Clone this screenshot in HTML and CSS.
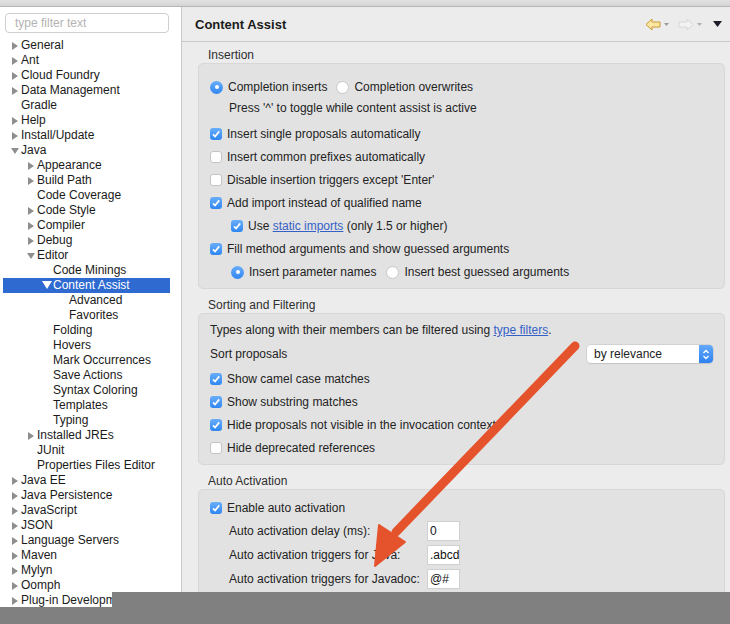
FILE: index.html
```html
<!DOCTYPE html>
<html>
<head>
<meta charset="utf-8">
<title>Preferences</title>
<link rel="stylesheet" href="styles.css">
</head>
<body>
<div class="titlebar"><span>Preferences</span></div>
<div class="main">
  <aside class="sidebar">
    <div class="filter">type filter text</div>
    <ul class="tree">
      <li class="l0"><i class="tw r"></i>General</li>
      <li class="l0"><i class="tw r"></i>Ant</li>
      <li class="l0"><i class="tw r"></i>Cloud Foundry</li>
      <li class="l0"><i class="tw r"></i>Data Management</li>
      <li class="l0"><i class="tw"></i>Gradle</li>
      <li class="l0"><i class="tw r"></i>Help</li>
      <li class="l0"><i class="tw r"></i>Install/Update</li>
      <li class="l0"><i class="tw d"></i>Java</li>
      <li class="l1"><i class="tw r"></i>Appearance</li>
      <li class="l1"><i class="tw r"></i>Build Path</li>
      <li class="l1"><i class="tw"></i>Code Coverage</li>
      <li class="l1"><i class="tw r"></i>Code Style</li>
      <li class="l1"><i class="tw r"></i>Compiler</li>
      <li class="l1"><i class="tw r"></i>Debug</li>
      <li class="l1"><i class="tw d"></i>Editor</li>
      <li class="l2"><i class="tw"></i>Code Minings</li>
      <li class="l2 sel"><i class="tw d"></i>Content Assist</li>
      <li class="l3"><i class="tw"></i>Advanced</li>
      <li class="l3"><i class="tw"></i>Favorites</li>
      <li class="l2"><i class="tw"></i>Folding</li>
      <li class="l2"><i class="tw"></i>Hovers</li>
      <li class="l2"><i class="tw"></i>Mark Occurrences</li>
      <li class="l2"><i class="tw"></i>Save Actions</li>
      <li class="l2"><i class="tw"></i>Syntax Coloring</li>
      <li class="l2"><i class="tw"></i>Templates</li>
      <li class="l2"><i class="tw"></i>Typing</li>
      <li class="l1"><i class="tw r"></i>Installed JREs</li>
      <li class="l1"><i class="tw"></i>JUnit</li>
      <li class="l1"><i class="tw"></i>Properties Files Editor</li>
      <li class="l0"><i class="tw r"></i>Java EE</li>
      <li class="l0"><i class="tw r"></i>Java Persistence</li>
      <li class="l0"><i class="tw r"></i>JavaScript</li>
      <li class="l0"><i class="tw r"></i>JSON</li>
      <li class="l0"><i class="tw r"></i>Language Servers</li>
      <li class="l0"><i class="tw r"></i>Maven</li>
      <li class="l0"><i class="tw r"></i>Mylyn</li>
      <li class="l0"><i class="tw r"></i>Oomph</li>
      <li class="l0"><i class="tw r"></i>Plug-in Development</li>
    </ul>
  </aside>
  <section class="panel">
    <header class="phead">
      <h1>Content Assist</h1>
      <div class="nav">
        <svg width="16" height="13" viewBox="0 0 16 13"><path d="M1 6.5 L7 1 L7 4 L15 4 L15 9 L7 9 L7 12 Z" fill="#fbe6a2" stroke="#c99a30" stroke-width="1" stroke-linejoin="round"/></svg>
        <svg class="dd" width="5" height="4" viewBox="0 0 5 4"><path d="M0 0 L5 0 L2.5 3 Z" fill="#9a9a9a"/></svg>
        <svg class="fwd" width="16" height="13" viewBox="0 0 16 13"><path d="M15 6.5 L9 1 L9 4 L1 4 L1 9 L9 9 L9 12 Z" fill="#f3f3f3" stroke="#d6d6d6" stroke-width="1" stroke-linejoin="round"/></svg>
        <svg class="dd" width="5" height="4" viewBox="0 0 5 4"><path d="M0 0 L5 0 L2.5 3 Z" fill="#b0b0b0"/></svg>
        <svg class="menu" width="9" height="6" viewBox="0 0 9 6"><path d="M0 0 L9 0 L4.5 6 Z" fill="#1c1c2a"/></svg>
      </div>
    </header>
    <div class="content">
      <div class="glabel">Insertion</div>
      <div class="group">
        <div class="row"><span class="rb on"></span>Completion inserts<span class="rb sp"></span>Completion overwrites</div>
        <div class="row note">Press '^' to toggle while content assist is active</div>
        <div class="row push"><span class="cb on"><svg width="12" height="12" viewBox="0 0 12 12"><path d="M3 6.3 L5.1 8.5 L9.2 3.4" fill="none" stroke="#fff" stroke-width="1.7"/></svg></span>Insert single proposals automatically</div>
        <div class="row"><span class="cb"></span>Insert common prefixes automatically</div>
        <div class="row"><span class="cb"></span>Disable insertion triggers except 'Enter'</div>
        <div class="row"><span class="cb on"><svg width="12" height="12" viewBox="0 0 12 12"><path d="M3 6.3 L5.1 8.5 L9.2 3.4" fill="none" stroke="#fff" stroke-width="1.7"/></svg></span>Add import instead of qualified name</div>
        <div class="row sub"><span class="cb on"><svg width="12" height="12" viewBox="0 0 12 12"><path d="M3 6.3 L5.1 8.5 L9.2 3.4" fill="none" stroke="#fff" stroke-width="1.7"/></svg></span>Use&nbsp;<a class="link">static imports</a>&nbsp;(only 1.5 or higher)</div>
        <div class="row"><span class="cb on"><svg width="12" height="12" viewBox="0 0 12 12"><path d="M3 6.3 L5.1 8.5 L9.2 3.4" fill="none" stroke="#fff" stroke-width="1.7"/></svg></span>Fill method arguments and show guessed arguments</div>
        <div class="row sub"><span class="rb on"></span>Insert parameter names<span class="rb sp2"></span>Insert best guessed arguments</div>
      </div>

      <div class="glabel gap">Sorting and Filtering</div>
      <div class="group sorting">
        <div class="row plain">Types along with their members can be filtered using&nbsp;<a class="link">type filters</a>.</div>
        <div class="row plain sortrow"><span class="grow">Sort proposals</span>
          <div class="select"><span class="sval">by relevance</span><span class="stepper"><svg width="8" height="11" viewBox="0 0 8 11"><path d="M1.5 4 L4 1.5 L6.5 4 M1.5 7 L4 9.5 L6.5 7" fill="none" stroke="#fff" stroke-width="1.3"/></svg></span></div>
        </div>
        <div class="row push2"><span class="cb on"><svg width="12" height="12" viewBox="0 0 12 12"><path d="M3 6.3 L5.1 8.5 L9.2 3.4" fill="none" stroke="#fff" stroke-width="1.7"/></svg></span>Show camel case matches</div>
        <div class="row"><span class="cb on"><svg width="12" height="12" viewBox="0 0 12 12"><path d="M3 6.3 L5.1 8.5 L9.2 3.4" fill="none" stroke="#fff" stroke-width="1.7"/></svg></span>Show substring matches</div>
        <div class="row"><span class="cb on"><svg width="12" height="12" viewBox="0 0 12 12"><path d="M3 6.3 L5.1 8.5 L9.2 3.4" fill="none" stroke="#fff" stroke-width="1.7"/></svg></span>Hide proposals not visible in the invocation context</div>
        <div class="row"><span class="cb"></span>Hide deprecated references</div>
      </div>

      <div class="glabel gap">Auto Activation</div>
      <div class="group auto">
        <div class="row"><span class="cb on"><svg width="12" height="12" viewBox="0 0 12 12"><path d="M3 6.3 L5.1 8.5 L9.2 3.4" fill="none" stroke="#fff" stroke-width="1.7"/></svg></span>Enable auto activation</div>
        <div class="field"><span class="flabel">Auto activation delay (ms):</span><span class="input">0</span></div>
        <div class="field"><span class="flabel">Auto activation triggers for Java:</span><span class="input">.abcd</span></div>
        <div class="field"><span class="flabel">Auto activation triggers for Javadoc:</span><span class="input">@#</span></div>
      </div>
    </div>
  </section>
</div>

<svg class="annot" width="730" height="624" viewBox="0 0 730 624">
  <line x1="575" y1="346" x2="396" y2="532" stroke="#e5532d" stroke-width="9" stroke-linecap="round"/>
  <path d="M375 566 L379 525 L405 542 Z" fill="#e5532d" stroke="#e5532d" stroke-width="2" stroke-linejoin="round"/>
</svg>
<div class="shade shade-a"></div>
<div class="shade shade-b"></div>
</body>
</html>
```

FILE: styles.css
```css
* { box-sizing: border-box; }
html, body { margin: 0; padding: 0; }
body {
  width: 730px;
  height: 624px;
  overflow: hidden;
  position: relative;
  font-family: "Liberation Sans", Arial, sans-serif;
  font-size: 12px;
  color: #1f1f1f;
  background: #ececec;
}

.titlebar {
  height: 7px;
  background: linear-gradient(#e2e2e2, #d4d4d4);
  border-bottom: 1px solid #b6b6b6;
  overflow: hidden;
  text-align: center;
}
.titlebar span {
  display: block;
  margin-top: -11px;
  font-size: 13px;
  line-height: 14px;
  color: #555;
}

.main { display: flex; height: 617px; }

.sidebar {
  width: 182px;
  flex: none;
  background: #fff;
  border-right: 1px solid #c9c9c9;
  padding-top: 6px;
}
.filter {
  margin: 0 12px 0 5px;
  height: 20px;
  border: 1px solid #cfcfcf;
  border-radius: 4px;
  padding-left: 9px;
  line-height: 18px;
  color: #b3b3b3;
  font-size: 12px;
}
.tree { list-style: none; margin: 5px 0 0; padding: 0; }
.tree li {
  height: 15px;
  line-height: 15px;
  margin: 0 11px 0 3px;
  white-space: nowrap;
  display: flex;
  align-items: center;
  color: #1a1a1a;
}
.tree .l0 { padding-left: 8px; }
.tree .l1 { padding-left: 24px; }
.tree .l2 { padding-left: 40px; }
.tree .l3 { padding-left: 56px; }
.tree li.sel { background: #2f6ad0; color: #fff; }
.tw { display: inline-block; width: 10px; height: 15px; flex: none; position: relative; }
.tw.r::before {
  content: "";
  position: absolute;
  left: 1px; top: 4px;
  border-left: 6px solid #8e8e8e;
  border-top: 4px solid transparent;
  border-bottom: 4px solid transparent;
}
.tw.d::before {
  content: "";
  position: absolute;
  left: 0; top: 5px;
  border-top: 6px solid #8e8e8e;
  border-left: 4px solid transparent;
  border-right: 4px solid transparent;
}
.sel .tw.d::before { border-top-color: #fff; left: -1px; border-left-width: 5px; border-right-width: 5px; border-top-width: 8px; top: 3px; }

.panel { flex: 1; display: flex; flex-direction: column; min-width: 0; }
.phead {
  height: 35px;
  flex: none;
  border-bottom: 1px solid #c9c9c9;
  display: flex;
  align-items: center;
  padding: 0 8px 0 13px;
}
.phead h1 { margin: 0; font-size: 13px; font-weight: bold; flex: 1; color: #1a1a1a; }
.nav { display: flex; align-items: center; gap: 3px; }
.nav .dd { margin-top: 2px; }
.nav .fwd { margin-left: 6px; }
.nav .menu { margin-left: 8px; }

.content { padding: 0 5px 0 16px; }
.glabel { padding-left: 10px; line-height: 16px; height: 16px; margin-top: 5px; color: #2e2e2e; }
.glabel.gap { margin-top: 8px; }
.group {
  background: #e2e2e2;
  border: 1px solid #d7d7d7;
  border-radius: 5px;
  padding: 14px 11px 7px;
  display: flex;
  flex-direction: column;
  gap: 5px;
}
.group.sorting { padding-top: 7px; }
.group.auto { padding-top: 9px; gap: 4px; height: 140px; }

.row { display: flex; align-items: center; height: 18px; white-space: nowrap; color: #222; }
.row.note { margin-top: -2px; padding-left: 19px; }
.row.push { margin-top: 3px; }
.row.push2 { margin-top: 2px; }
.row.sub { padding-left: 21px; }
.row.sortrow { margin-top: 1px; }
.grow { flex: 1; }

.cb {
  width: 12px; height: 12px; flex: none;
  border-radius: 3px;
  background: #fff;
  border: 1px solid #c4c4c4;
  margin-right: 5px;
  position: relative;
}
.cb.on {
  border: none;
  background: linear-gradient(#69aefb, #2f86f2);
}
.cb svg { position: absolute; left: 0; top: 0; }
.rb {
  width: 13px; height: 13px; flex: none;
  border-radius: 50%;
  background: #fff;
  border: 1px solid #c7c7c7;
  margin-right: 5px;
  position: relative;
}
.rb.on { border: none; background: linear-gradient(#69aefb, #2f86f2); }
.rb.on::after {
  content: "";
  position: absolute;
  left: 4.5px; top: 4.5px;
  width: 4px; height: 4px;
  border-radius: 50%;
  background: #fff;
}
.rb.sp { margin-left: 9px; }
.rb.sp2 { margin-left: 10px; }
.link { color: #3561c6; text-decoration: underline; }

.select {
  width: 126px; height: 18px;
  background: #fff;
  border-radius: 4px;
  box-shadow: 0 0 0 0.5px #c2c2c2, 0 1px 1px rgba(0,0,0,0.12);
  display: flex;
  align-items: center;
  padding-left: 7px;
}
.sval { flex: 1; }
.stepper {
  width: 14px; height: 18px;
  background: linear-gradient(#63a8fa, #2d82f0);
  border-radius: 0 4px 4px 0;
  display: flex; align-items: center; justify-content: center;
}

.field { display: flex; align-items: center; height: 20px; padding-left: 19px; }
.flabel { width: 198px; flex: none; color: #222; white-space: nowrap; }
.input {
  width: 33px; height: 20px;
  background: #fff;
  border: 1px solid #d0d0d0;
  padding-left: 2px;
  line-height: 18px;
  overflow: hidden;
  white-space: nowrap;
  color: #111;
}

.annot { position: absolute; left: 0; top: 0; pointer-events: none; }
.shade { position: absolute; background: #808080; }
.shade-a { left: 112px; top: 592px; width: 618px; height: 32px; }
.shade-b { left: 0; top: 607px; width: 112px; height: 17px; }
```
